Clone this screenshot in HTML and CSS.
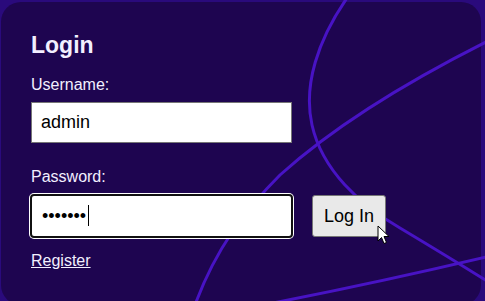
FILE: index.html
```html
<!DOCTYPE html>
<html lang="en">
<head>
<meta charset="utf-8">
<title>Login</title>
<link rel="stylesheet" href="styles.css">
</head>
<body>
<svg class="bg-lines" viewBox="0 0 485 301" xmlns="http://www.w3.org/2000/svg">
  <path d="M347,-2 C318,40 303,85 312,125 C322,170 360,205 400,228 C430,246 460,264 490,283"/>
  <path d="M490,40 C400,85 330,130 280,175 C245,210 215,250 195,305"/>
  <path d="M268,304 Q380,282 490,256"/>
</svg>
<main class="card">
  <div class="card-content">
    <h1 class="title">Login</h1>
    <label class="field-label" for="username">Username:</label>
    <input id="username" class="text-input" type="text" value="admin">
    <label class="field-label pw-label" for="password">Password:</label>
    <div class="pw-row">
      <div class="pw-wrap">
        <input id="password" class="text-input pw-input" type="password" value="1234567">
        <span class="caret"></span>
      </div>
      <button class="btn" type="button">Log In</button>
    </div>
    <a class="register" href="#">Register</a>
  </div>
</main>
<svg class="cursor" viewBox="0 0 13 20" xmlns="http://www.w3.org/2000/svg">
  <path d="M1,1 L1,16 L4.5,12.5 L7,18.5 L9.5,17.5 L7,11.5 L12,11.5 Z"/>
</svg>
</body>
</html>
```

FILE: styles.css
```css
html, body {
  margin: 0;
  height: 100%;
  overflow: hidden;
}

body {
  position: relative;
  box-sizing: border-box;
  padding: 2px 0 0 1px;
  background: #2a0a7c;
  font-family: "Liberation Sans", Arial, sans-serif;
}

.bg-lines {
  position: absolute;
  left: 0;
  top: 0;
  width: 485px;
  height: 301px;
  z-index: 0;
  pointer-events: none;
  fill: none;
  stroke: #4813c4;
  stroke-width: 3;
}

.card {
  display: block;
  width: 480px;
  height: 303px;
  box-sizing: border-box;
  border-radius: 20px;
  background: #1e0550;
  padding: 30px 30px 0 30px;
}

.card-content {
  position: relative;
  z-index: 1;
  display: flex;
  flex-direction: column;
  align-items: flex-start;
}

.title {
  margin: 0;
  font-size: 23px;
  line-height: 27px;
  font-weight: bold;
  color: #f2efff;
}

.field-label {
  margin-top: 17px;
  font-size: 16px;
  line-height: 18px;
  color: #f2efff;
}

.pw-label {
  margin-top: 25px;
}

.text-input {
  margin: 8px 0 0 0;
  width: 261px;
  height: 41px;
  box-sizing: border-box;
  border: 1px solid #767676;
  border-radius: 0;
  padding: 0 9px;
  font-family: "Liberation Sans", Arial, sans-serif;
  font-size: 18px;
  color: #000;
  background: #fff;
  outline: none;
}

.pw-row {
  display: flex;
  align-items: center;
  gap: 19px;
  margin-top: 8px;
}

.pw-wrap {
  position: relative;
  margin-left: -1px;
}

.pw-input {
  margin: 0;
  width: 263px;
  height: 44px;
  border: 2px solid #111;
  border-radius: 4px;
  padding: 0 10px;
  box-shadow: 0 0 0 1px #fff;
}

.caret {
  position: absolute;
  left: 58px;
  top: 11px;
  width: 1px;
  height: 21px;
  background: #000;
}

.btn {
  height: 42px;
  margin: 0;
  padding: 0 11px;
  font-family: "Liberation Sans", Arial, sans-serif;
  font-size: 18px;
  color: #000;
  background: #e9e9e9;
  border: 1px solid #767676;
  border-radius: 3px;
}

.register {
  margin-top: 14px;
  font-size: 16px;
  line-height: 18px;
  color: #f2efff;
  text-decoration: underline;
}

.cursor {
  position: absolute;
  left: 377px;
  top: 225px;
  width: 13px;
  height: 20px;
  z-index: 2;
  fill: #fff;
  stroke: #000;
  stroke-width: 1;
  stroke-linejoin: miter;
}
```
